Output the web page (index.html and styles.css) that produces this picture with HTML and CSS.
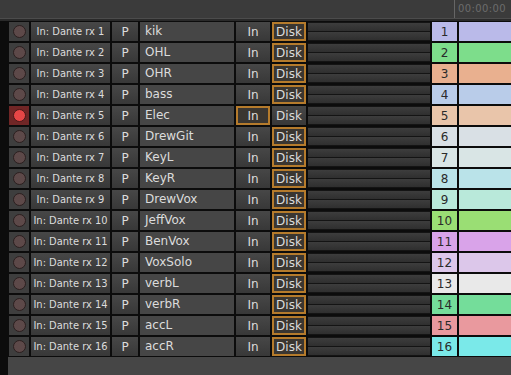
FILE: index.html
```html
<!DOCTYPE html>
<html lang="en">
<head>
  <meta charset="UTF-8" />
  <title>Tracks</title>
  <link rel="stylesheet" href="styles.css">
</head>
<body>
  <div class="ruler">
    <span class="clock">00:00:00</span>
  </div>
  <div class="tracks" id="tracks"></div>
  <div class="footer"></div>

  <script>
    const tracks = [
      ["kik", "#babae9"], ["OHL", "#7ddd8b"], ["OHR", "#e9b08f"], ["bass", "#b9cce9"],
      ["Elec", "#e9c5aa"], ["DrewGit", "#d9e0e5"], ["KeyL", "#d9e5e5"], ["KeyR", "#bae3e9"],
      ["DrewVox", "#b9e9da"], ["JeffVox", "#9ade74"], ["BenVox", "#d9a3e9"], ["VoxSolo", "#dcc7ea"],
      ["verbL", "#e9e9e9"], ["verbR", "#74dd9a"], ["accL", "#e9999e"], ["accR", "#7ae9e9"]
    ];

    const list = document.getElementById("tracks");
    tracks.forEach(([name, colour], i) => {
      const armed = i === 4;  // 第5轨录音中
      const row = document.createElement("div");
      row.className = "track";
      row.innerHTML = `
        <div class="rec${armed ? " armed" : ""}"><span class="dot"></span></div>
        <div class="btn input">In: Dante rx ${i + 1}</div>
        <div class="btn p">P</div>
        <div class="name">${name}</div>
        <div class="btn mon${armed ? " on" : ""}">In</div>
        <div class="btn mon${armed ? "" : " on"}">Disk</div>
        <div class="meter"><div class="bar"></div><div class="bar"></div></div>
        <div class="num" style="background:${colour}">${i + 1}</div>
        <div class="strip" style="background:${colour}"></div>`;
      list.appendChild(row);
    });
  </script>
</body>
</html>
```

FILE: styles.css
```css
body {
  margin: 0;
  background: #0c0c0c;
  font-family: 'DejaVu Sans', sans-serif;
  color: #dcdcdc;
  height: 375px;
  overflow: hidden;
}

.ruler {
  height: 18px;
  background: #3b3b3b;
  border-bottom: 1px solid #4c4c4c;
  position: relative;
}

.clock {
  position: absolute;
  left: 454px;
  top: 0;
  height: 18px;
  padding-left: 3px;
  border-left: 1px solid #666;
  font-size: 10px;
  line-height: 18px;
  color: #6c6c6c;
  letter-spacing: 0.4px;
}

.tracks {
  background: #0c0c0c;
  border-top: 2px solid #2a2a2a;
  padding: 1px 0 0 9px;
  display: flex;
  flex-direction: column;
  gap: 2px;
}

.track {
  display: flex;
  gap: 2px;
  height: 19px;
}

.rec {
  width: 20px;
  background: #3e3e3e;
  display: flex;
  align-items: center;
  justify-content: center;
}

.rec .dot {
  width: 11px;
  height: 11px;
  border-radius: 50%;
  background: #5d4949;
  border: 1px solid #2b1f1f;
}

.rec.armed {
  background: #702626;
}

.rec.armed .dot {
  background: #e64646;
  border-color: #4a1818;
}

.btn {
  background: linear-gradient(#474747, #383838);
  display: flex;
  align-items: center;
  justify-content: center;
  font-size: 12px;
  box-sizing: border-box;
  white-space: nowrap;
}

.input {
  width: 79px;
  font-family: 'DejaVu Sans Condensed', 'DejaVu Sans', sans-serif;
  font-size: 11px;
}

.p {
  width: 26px;
}

.name {
  width: 94px;
  background: #464646;
  font-size: 12px;
  line-height: 19px;
  padding-left: 5px;
  box-sizing: border-box;
}

.mon {
  width: 34px;
}

.mon.on {
  background: #3a3631;
  border: 2px solid #b57b2c;
}

.meter {
  width: 122px;
  background: #141414;
  display: flex;
  flex-direction: column;
  justify-content: space-between;
  padding: 1px 0;
  box-sizing: border-box;
}

.bar {
  height: 8px;
  background: linear-gradient(#3d3d3d, #2f2f2f);
}

.num {
  width: 25px;
  color: #2a2a2a;
  font-size: 12px;
  display: flex;
  align-items: center;
  justify-content: center;
}

.strip {
  flex: 1;
}

.footer {
  margin: 1px 0 0 8px;
  height: 20px;
  background: #464646;
}
```
